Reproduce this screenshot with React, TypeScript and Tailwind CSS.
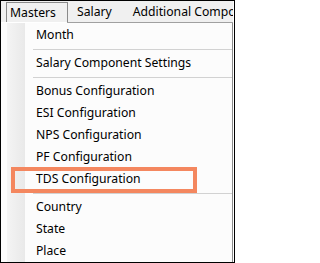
import React from 'react';

type Entry = { label: string } | { sep: true };

const ITEMS: Entry[] = [
  { label: 'Month' },
  { sep: true },
  { label: 'Salary Component Settings' },
  { sep: true },
  { label: 'Bonus Configuration' },
  { label: 'ESI Configuration' },
  { label: 'NPS Configuration' },
  { label: 'PF Configuration' },
  { label: 'TDS Configuration' },
  { sep: true },
  { label: 'Country' },
  { label: 'State' },
  { label: 'Place' },
];

export default function App() {
  return (
    <div className="relative w-[235px] h-[263px] overflow-hidden border border-black bg-white text-[12.2px] text-black font-['Noto_Sans','Open_Sans',sans-serif]">
      {/* menu bar */}
      <div className="flex w-[232px] h-[21px] overflow-hidden bg-[#f0f0f0] whitespace-nowrap">
        <div className="shrink-0 ml-[5px] mt-[1px] w-[62px] h-[20px] border border-b-0 border-[#8a8a8a] pl-[3px] leading-[19px]">
          Masters
        </div>
        <div className="shrink-0 ml-[9px] leading-[21px]">Salary</div>
        <div className="shrink-0 ml-[21px] leading-[21px]">Additional Components</div>
      </div>
      <div className="ml-[66px] w-[166px] h-px bg-[#a0a0a0]" />

      {/* dropdown */}
      <div className="w-[232px] h-[241px] pt-px border-r border-[#8a8a8a] bg-[linear-gradient(to_right,#fcfcfc_6px,#f4f4f4_6px,#e9e9e9_24px,#fcfcfc_24px)]">
        {ITEMS.map((it, i) =>
          'sep' in it ? (
            <div key={i} className="h-[6px] flex items-center">
              <div className="ml-[32px] flex-1 h-px bg-[#d2d2d2]" />
            </div>
          ) : (
            <div key={i} className="h-[22px] pl-[35px] leading-[22px] whitespace-nowrap">
              {it.label}
            </div>
          )
        )}
      </div>

      {/* highlight annotation */}
      <div className="absolute left-[10px] top-[166px] w-[186px] h-[26px] border-4 border-[#f4875f]" />
    </div>
  );
}
